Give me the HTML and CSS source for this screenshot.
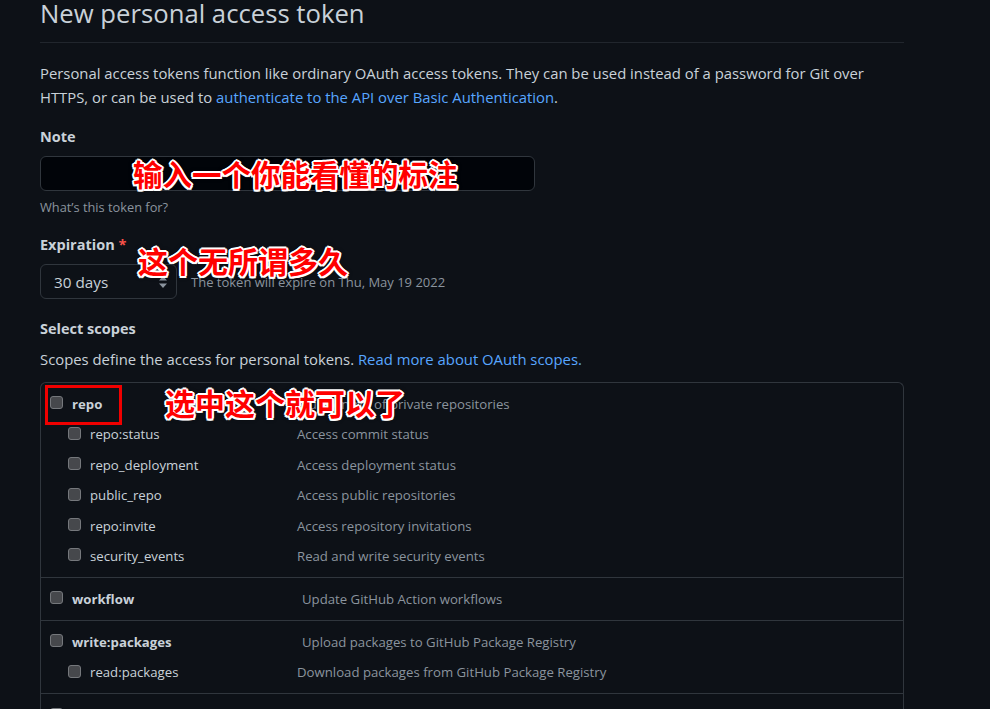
FILE: index.html
```html
<!DOCTYPE html>
<html lang="en">
<head>
<meta charset="utf-8">
<title>New personal access token</title>
<link rel="stylesheet" href="styles.css">
</head>
<body>
<div class="page">
  <h1 class="title">New personal access token</h1>
  <p class="intro">Personal access tokens function like ordinary OAuth access tokens. They can be used instead of a password for Git over HTTPS, or can be used to <a href="#">authenticate to the API over Basic Authentication</a>.</p>

  <div class="field">
    <div class="label">Note</div>
    <div class="input"></div>
    <div class="help">What’s this token for?</div>
  </div>

  <div class="field">
    <div class="label">Expiration <span class="req">*</span></div>
    <div class="exp-row">
      <div class="select"><span>30 days</span>
        <svg class="arrows" width="10" height="14" viewBox="0 0 10 14"><path d="M5 1 L9 5.5 H1 Z M5 13 L9 8.5 H1 Z" fill="#8b949e"/></svg>
      </div>
      <span class="exp-note">The token will expire on Thu, May 19 2022</span>
    </div>
  </div>

  <div class="label scopes-label">Select scopes</div>
  <p class="scopes-desc">Scopes define the access for personal tokens. <a href="#">Read more about OAuth scopes.</a></p>

  <div class="scopes">
    <div class="group">
      <div class="row top"><span class="cb"></span><span class="name">repo</span><span class="desc">Full control of private repositories</span></div>
      <div class="row sub"><span class="cb"></span><span class="name">repo:status</span><span class="desc">Access commit status</span></div>
      <div class="row sub"><span class="cb"></span><span class="name">repo_deployment</span><span class="desc">Access deployment status</span></div>
      <div class="row sub"><span class="cb"></span><span class="name">public_repo</span><span class="desc">Access public repositories</span></div>
      <div class="row sub"><span class="cb"></span><span class="name">repo:invite</span><span class="desc">Access repository invitations</span></div>
      <div class="row sub"><span class="cb"></span><span class="name">security_events</span><span class="desc">Read and write security events</span></div>
    </div>
    <div class="group">
      <div class="row top"><span class="cb"></span><span class="name">workflow</span><span class="desc">Update GitHub Action workflows</span></div>
    </div>
    <div class="group">
      <div class="row top"><span class="cb"></span><span class="name">write:packages</span><span class="desc">Upload packages to GitHub Package Registry</span></div>
      <div class="row sub"><span class="cb"></span><span class="name">read:packages</span><span class="desc">Download packages from GitHub Package Registry</span></div>
    </div>
    <div class="group">
      <div class="row top"><span class="cb"></span><span class="name">delete:packages</span><span class="desc">Delete packages from GitHub Package Registry</span></div>
    </div>
  </div>

  <div class="mark-box"></div>
  <div class="anno anno-note">输入一个你能看懂的标注</div>
  <div class="anno anno-exp">这个无所谓多久</div>
  <div class="anno anno-repo">选中这个就可以了</div>
</div>
</body>
</html>
```

FILE: styles.css
```css
* { box-sizing: border-box; }
html, body { margin: 0; padding: 0; }
body {
  background: #0d1117;
  color: #c9d1d9;
  font-family: "Open Sans", "Noto Sans", sans-serif;
  font-size: 14.85px;
  overflow: hidden;
  height: 709px;
}
a { color: #58a6ff; text-decoration: none; }
.page {
  position: relative;
  width: 904px;
  padding-left: 40px;
}
.title {
  margin: 0;
  font-size: 25.7px;
  font-weight: 400;
  line-height: 28px;
  padding-bottom: 14px;
  border-bottom: 1px solid #21262d;
  color: #c9d1d9;
}
.intro {
  margin: 18px 0 0;
  line-height: 24px;
}
.field { margin-top: 16px; }
.label {
  font-weight: 700;
  line-height: 24px;
  font-size: 14.5px;
}
.req { color: #f85149; }
.input {
  margin-top: 7px;
  width: 495px;
  height: 35px;
  background: #010409;
  border: 1px solid #30363d;
  border-radius: 6px;
}
.help {
  margin-top: 6px;
  font-size: 12.8px;
  line-height: 20px;
  color: #8b949e;
}
.exp-row {
  margin-top: 7px;
  display: flex;
  align-items: center;
  gap: 14px;
}
.select {
  width: 137px;
  height: 35px;
  border: 1px solid #30363d;
  border-radius: 6px;
  display: flex;
  align-items: center;
  justify-content: space-between;
  padding: 0 8px 0 13px;
  font-size: 15.3px;
}
.arrows { display: block; }
.exp-note {
  color: #8b949e;
  font-size: 13px;
}
.scopes-label { margin-top: 18px; }
.scopes-desc {
  margin: 6px 0 0;
  line-height: 24px;
}
.scopes {
  margin-top: 11px;
  border: 1px solid #30363d;
  border-bottom: 0;
  border-radius: 6px 6px 0 0;
  font-size: 13.2px;
}
.group {
  padding: 5.8px 0;
  border-bottom: 1px solid #30363d;
}
.row {
  height: 30.4px;
  display: flex;
  align-items: center;
  padding-left: 9px;
}
.row.sub { padding-left: 27px; }
.cb {
  flex: none;
  width: 13px;
  height: 13px;
  background: #46484c;
  border: 1px solid #75787c;
  border-radius: 3px;
  margin-top: -2px;
}
.name {
  margin-left: 9px;
  color: #c9d1d9;
}
.row.top .name { width: 230px; font-weight: 700; }
.row.sub .name { width: 207px; }
.desc { color: #8b949e; }

.mark-box {
  position: absolute;
  left: 45px;
  top: 385px;
  width: 77px;
  height: 40px;
  border: 3px solid #f00000;
}
.anno {
  position: absolute;
  font-family: "Noto Sans CJK SC", sans-serif;
  font-weight: 700;
  font-size: 30px;
  line-height: 34px;
  color: #ff0000;
  white-space: nowrap;
  text-shadow:
    2px 0 0 #fff, -2px 0 0 #fff, 0 2px 0 #fff, 0 -2px 0 #fff,
    1.5px 1.5px 0 #fff, -1.5px 1.5px 0 #fff, 1.5px -1.5px 0 #fff, -1.5px -1.5px 0 #fff,
    0 0 5px rgba(0,0,0,0.6);
}
.anno-note { left: 133px; top: 156px; font-size: 29.5px; }
.anno-exp { left: 138px; top: 243px; }
.anno-repo { left: 165px; top: 385px; }
```
